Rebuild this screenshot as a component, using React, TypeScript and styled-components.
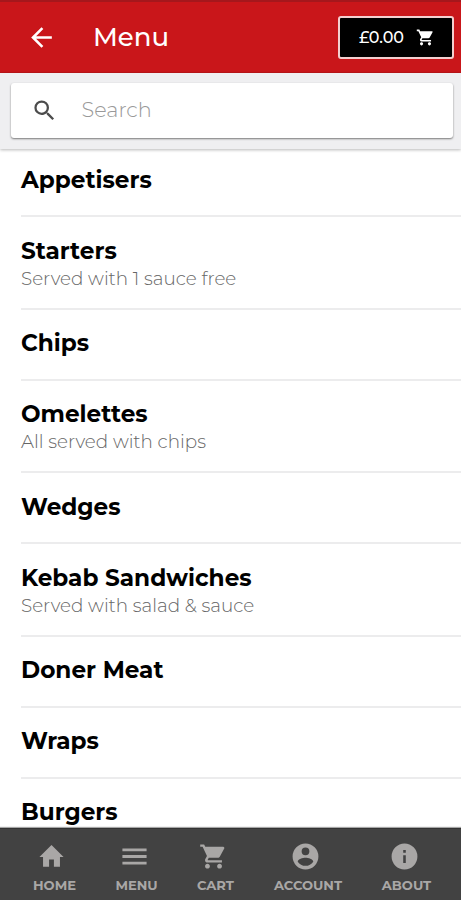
import React from 'react';
import styled, { createGlobalStyle } from 'styled-components';

const GlobalStyle = createGlobalStyle`
  * { box-sizing: border-box; }
  html, body { margin: 0; height: 100%; overflow: hidden; background: #fff; }
  #root { height: 100%; }
`;

const Screen = styled.div`
  display: flex;
  flex-direction: column;
  height: 100vh;
  overflow: hidden;
  background: #fff;
  color: #000;
  font-family: 'Montserrat', 'Inter', sans-serif;
`;

const AppBar = styled.header`
  flex: none;
  display: flex;
  align-items: center;
  height: 73px;
  padding: 1px 7px 1px 26px;
  background: #c9161a;
  border-top: 2px solid #a5171c;
  border-bottom: 1px solid #bd1519;
  color: #fff;
`;

const BackButton = styled.button`
  display: flex;
  padding: 0;
  border: 0;
  background: none;
  color: inherit;
`;

const Title = styled.h1`
  flex: 1;
  margin: 0 0 0 36px;
  font-size: 26px;
  font-weight: 500;
  line-height: 32px;
`;

const CartButton = styled.button`
  display: flex;
  align-items: center;
  justify-content: space-between;
  width: 116px;
  height: 43px;
  padding: 0 17px 0 19px;
  border: 2px solid #f3cfcf;
  border-radius: 3px;
  background: #000;
  color: #fff;
  font: inherit;
  font-size: 16px;
  font-weight: 500;
`;

const SearchBar = styled.div`
  flex: none;
  position: relative;
  height: 76px;
  padding: 10px 8px 11px 11px;
  background: #efeff1;
  box-shadow: 0 1px 3px rgba(0, 0, 0, 0.28);
`;

const SearchField = styled.label`
  display: flex;
  align-items: center;
  height: 55px;
  padding-left: 20px;
  border-radius: 3px;
  background: #fff;
  box-shadow: 0 1px 2px rgba(0, 0, 0, 0.5);
  color: #4c4c4c;
`;

const SearchInput = styled.input`
  flex: 1;
  min-width: 0;
  margin: -2px 0 0 23.5px;
  padding: 0;
  border: 0;
  outline: 0;
  background: none;
  font: inherit;
  font-size: 20.8px;
  font-weight: 300;
  &::placeholder { color: #999; opacity: 1; }
`;

const CategoryList = styled.ul`
  flex: 1;
  min-height: 0;
  margin: -3px 0 0;
  padding: 0 0 0 21px;
  overflow: hidden;
  list-style: none;
`;

const Category = styled.li<{ $detailed: boolean }>`
  height: ${(p) => (p.$detailed ? 92.6 : 71)}px;
  padding-top: 19.5px;
  border-bottom: 2px solid #ececed;
`;

const CategoryName = styled.h2`
  margin: 0;
  font-size: 23.2px;
  font-weight: 700;
  line-height: 28px;
`;

const CategoryNote = styled.p`
  margin: 1px 0 0;
  color: #666;
  font-size: 18.35px;
  font-weight: 300;
  line-height: 25px;
`;

const TabBar = styled.nav`
  flex: none;
  position: relative;
  display: flex;
  height: 72px;
  padding: 0 4px 0 14px;
  background: #424242;
  border-top: 1px solid #333;
  box-shadow: 0 -1px 1px rgba(0, 0, 0, 0.35);
`;

const Tab = styled.a<{ $width: number }>`
  display: flex;
  flex: none;
  flex-direction: column;
  align-items: center;
  width: ${(p) => p.$width}px;
  padding-top: 11px;
  color: #a9a7a6;
`;

const TabIcon = styled.span<{ $shift: number }>`
  display: flex;
  align-items: center;
  height: 32px;
  margin-right: ${(p) => p.$shift}px;
`;

const TabLabel = styled.span`
  margin-top: 6px;
  font-size: 13.1px;
  font-weight: 700;
  line-height: 15px;
`;

const paths = {
  back: 'M20 11H7.83l5.59-5.59L12 4l-8 8 8 8 1.41-1.41L7.83 13H20v-2z',
  search:
    'M15.5 14h-.79l-.28-.27A6.47 6.47 0 0 0 16 9.5 6.5 6.5 0 1 0 9.5 16c1.61 0 3.09-.59 4.23-1.57l.27.28v.79l5 4.99L20.49 19l-4.99-5zm-6 0a4.5 4.5 0 1 1 0-9 4.5 4.5 0 0 1 0 9z',
  cart: 'M7 18c-1.1 0-1.99.9-1.99 2S5.9 22 7 22s2-.9 2-2-.9-2-2-2zM1 2v2h2l3.6 7.59-1.35 2.45c-.16.28-.25.61-.25.96 0 1.1.9 2 2 2h12v-2H7.42c-.14 0-.25-.11-.25-.25l.03-.12.9-1.63h7.45c.75 0 1.41-.41 1.75-1.03l3.58-6.49A1 1 0 0 0 20.01 4H5.21l-.94-2H1zm16 16c-1.1 0-1.99.9-1.99 2s.89 2 1.99 2 2-.9 2-2-.9-2-2-2z',
  home: 'M10 20.5v-6h4v6h5v-8h3L12 2.5 2 12.5h3v8z',
  menu: 'M2 18.7h20v-2.4H2v2.4zm0-5.5h20v-2.4H2v2.4zm0-7.9v2.4h20V5.3H2z',
  account:
    'M12 2a10 10 0 1 0 0 20 10 10 0 0 0 0-20zm0 3a3 3 0 1 1 0 6 3 3 0 0 1 0-6zm0 14.2a7.2 7.2 0 0 1-6-3.22c.03-1.99 4-3.08 6-3.08s5.97 1.09 6 3.08a7.2 7.2 0 0 1-6 3.22z',
  info: 'M12 2a10 10 0 1 0 0 20 10 10 0 0 0 0-20zm1 15h-2v-6h2v6zm0-8h-2V7h2v2z',
};

function Icon({ name, size }: { name: keyof typeof paths; size: number }) {
  return (
    <svg width={size} height={size} viewBox="0 0 24 24" fill="currentColor" aria-hidden="true">
      <path d={paths[name]} />
    </svg>
  );
}

const categories: { name: string; note?: string }[] = [
  { name: 'Appetisers' },
  { name: 'Starters', note: 'Served with 1 sauce free' },
  { name: 'Chips' },
  { name: 'Omelettes', note: 'All served with chips' },
  { name: 'Wedges' },
  { name: 'Kebab Sandwiches', note: 'Served with salad & sauce' },
  { name: 'Doner Meat' },
  { name: 'Wraps' },
  { name: 'Burgers' },
];

const tabs: { label: string; icon: keyof typeof paths; size: number; width: number; shift: number }[] = [
  { label: 'HOME', icon: 'home', size: 29, width: 81, shift: 6 },
  { label: 'MENU', icon: 'menu', size: 29, width: 83, shift: 5 },
  { label: 'CART', icon: 'cart', size: 29, width: 75, shift: 4 },
  { label: 'ACCOUNT', icon: 'account', size: 31, width: 110, shift: 6 },
  { label: 'ABOUT', icon: 'info', size: 31, width: 87, shift: 5 },
];

export default function App() {
  return (
    <Screen>
      <GlobalStyle />
      <AppBar>
        <BackButton aria-label="Back">
          <Icon name="back" size={31} />
        </BackButton>
        <Title>Menu</Title>
        <CartButton>
          £0.00
          <Icon name="cart" size={19} />
        </CartButton>
      </AppBar>
      <SearchBar>
        <SearchField>
          <Icon name="search" size={27} />
          <SearchInput placeholder="Search" />
        </SearchField>
      </SearchBar>
      <CategoryList>
        {categories.map((c) => (
          <Category key={c.name} $detailed={Boolean(c.note)}>
            <CategoryName>{c.name}</CategoryName>
            {c.note && <CategoryNote>{c.note}</CategoryNote>}
          </Category>
        ))}
      </CategoryList>
      <TabBar>
        {tabs.map((t) => (
          <Tab key={t.label} $width={t.width}>
            <TabIcon $shift={t.shift}>
              <Icon name={t.icon} size={t.size} />
            </TabIcon>
            <TabLabel>{t.label}</TabLabel>
          </Tab>
        ))}
      </TabBar>
    </Screen>
  );
}
